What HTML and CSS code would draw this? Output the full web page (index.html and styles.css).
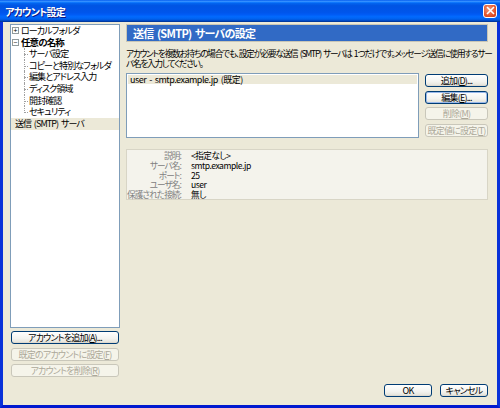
FILE: index.html
```html
<!DOCTYPE html>
<html lang="ja">
<head>
<meta charset="utf-8">
<title>アカウント設定</title>
<link rel="stylesheet" href="styles.css">
</head>
<body>
<div class="window">
  <div class="titlebar">
    <span class="title">アカウント設定</span>
    <span class="close"><svg width="9" height="9" viewBox="0 0 9 9"><path d="M1 1L8 8M8 1L1 8" stroke="#fff" stroke-width="1.6"/></svg></span>
  </div>
  <div class="client">
    <div class="leftcol">
      <div class="tree">
        <div class="node"><span class="pm">+</span><span>ローカルフォルダ</span></div>
        <div class="node bold"><span class="pm">−</span><span>任意の名称</span></div>
        <div class="children">
          <div class="child">サーバ設定</div>
          <div class="child">コピーと特別なフォルダ</div>
          <div class="child">編集とアドレス入力</div>
          <div class="child">ディスク領域</div>
          <div class="child">開封確認</div>
          <div class="child last">セキュリティ</div>
        </div>
        <div class="node selected">送信 (SMTP) サーバ</div>
      </div>
      <div class="leftbtns">
        <button class="btn">アカウントを追加(<u>A</u>)...</button>
        <button class="btn" disabled>既定のアカウントに設定(<u>F</u>)</button>
        <button class="btn" disabled>アカウントを削除(<u>R</u>)</button>
      </div>
    </div>
    <div class="rightcol">
      <div class="header">送信 (SMTP) サーバの設定</div>
      <p class="desc">アカウントを複数お持ちの場合でも、設定が必要な送信 (SMTP) サーバは 1つだけです。メッセージ送信に使用するサー<br>バ名を入力してください。</p>
      <div class="listrow">
        <div class="list">
          <div class="item">user - smtp.example.jp (既定)</div>
        </div>
        <div class="listbtns">
          <button class="btn">追加(<u>D</u>)...</button>
          <button class="btn focus">編集(<u>E</u>)...</button>
          <button class="btn" disabled>削除(<u>M</u>)</button>
          <button class="btn" disabled>既定値に設定(<u>T</u>)</button>
        </div>
      </div>
      <div class="details">
        <span class="lbl">説明:</span><span class="val">&lt;指定なし&gt;</span>
        <span class="lbl">サーバ名:</span><span class="val">smtp.example.jp</span>
        <span class="lbl">ポート:</span><span class="val">25</span>
        <span class="lbl">ユーザ名:</span><span class="val">user</span>
        <span class="lbl">保護された接続:</span><span class="val">無し</span>
      </div>
      <div class="dlgbtns">
        <button class="btn">OK</button>
        <button class="btn">キャンセル</button>
      </div>
    </div>
  </div>
</div>
</body>
</html>
```
FILE: styles.css
```css
* { box-sizing: border-box; }
html, body { margin: 0; padding: 0; }
body {
  width: 500px;
  height: 408px;
  font-family: "Noto Sans CJK JP", "Liberation Sans", sans-serif;
  font-size: 9px;
  font-feature-settings: "palt";
  letter-spacing: -0.9px;
  word-spacing: 1.5px;
  color: #000;
  overflow: hidden;
}
.window {
  width: 500px;
  height: 408px;
  display: flex;
  flex-direction: column;
  background: #0842d6;
  border-left: 3px solid #0831d9;
  border-right: 3px solid #0831d9;
  border-bottom: 3px solid #0019cf;
}
.titlebar {
  height: 22px;
  margin: 0 -3px;
  padding: 0 3px 0 5px;
  display: flex;
  align-items: center;
  justify-content: space-between;
  background: linear-gradient(#0058ee 0%, #3a93ff 6%, #127dff 10%, #0262ee 16%, #0054e3 26%, #0055eb 56%, #005bf5 66%, #026afe 76%, #0062ef 86%, #0052d6 92%, #0040ab 96%, #003092 100%);
  color: #fff;
}
.title {
  font-weight: bold;
  font-size: 10px;
  letter-spacing: -0.8px;
  text-shadow: 1px 1px 0 #0a1883;
}
.close {
  width: 14px;
  height: 14px;
  margin-top: -1px;
  border: 1px solid #fff;
  border-radius: 3px;
  background: radial-gradient(circle at 40% 35%, #f29a7b, #e3552c 60%, #c33b14);
  display: flex;
  align-items: center;
  justify-content: center;
}
.close svg { display: block; }
.client {
  flex: 1;
  min-height: 0;
  background: #ece9d8;
  display: flex;
  gap: 6px;
  padding: 2px 9px 8px 7px;
}
.leftcol {
  width: 110px;
  flex: none;
  display: flex;
  flex-direction: column;
}
.tree {
  height: 304px;
  background: #fff;
  border: 1px solid #7f9db9;
  padding: 0;
}
.node {
  display: flex;
  align-items: center;
  height: 11.6px;
  line-height: 11.6px;
  white-space: nowrap;
}
.node.bold { font-weight: bold; font-size: 9.5px; }
.pm {
  width: 7px;
  height: 7px;
  border: 1px solid #919b9c;
  font-size: 7px;
  line-height: 5px;
  letter-spacing: 0;
  text-align: center;
  font-weight: normal;
  color: #000;
  margin: 0 2px 0 1px;
  background: #fff;
  flex: none;
}
.children {
  margin-left: 13px;
}
.child {
  height: 11.6px;
  line-height: 11.6px;
  padding-left: 5px;
  position: relative;
  white-space: nowrap;
}
.child::before {
  content: "";
  position: absolute;
  left: 0;
  top: 0;
  bottom: 0;
  border-left: 1px dotted #a0a0a0;
}
.child.last::before { bottom: 5px; }
.child::after {
  content: "";
  position: absolute;
  left: 0;
  top: 6px;
  width: 4px;
  border-top: 1px dotted #a0a0a0;
}
.node.selected {
  margin-top: 0.5px;
  background: #ece9d8;
  height: 12px;
  padding-left: 4px;
}
.leftbtns {
  margin-top: 3px;
  display: flex;
  flex-direction: column;
  gap: 3.7px;
  padding: 0 1px;
}
.btn {
  font-family: inherit;
  font-size: 9px;
  letter-spacing: -0.8px;
  word-spacing: 1px;
  font-feature-settings: "palt";
  height: 13px;
  padding: 0;
  border: 1px solid #003c74;
  border-radius: 3px;
  background: linear-gradient(#ffffff, #f3f3ef 60%, #e6e5dd 90%, #d6d0c5);
  color: #000;
  line-height: 11px;
  white-space: nowrap;
}
.btn:disabled {
  border-color: #c9c7ba;
  background: #f5f4ea;
  color: #aca899;
}
.btn.focus {
  box-shadow: inset 0 0 0 1px #98b8ea;
}
.rightcol {
  width: 362px;
  flex: none;
  min-width: 0;
  display: flex;
  flex-direction: column;
}
.header {
  height: 18px;
  background: #316ac5;
  border: 1px solid #c9c6b6;
  color: #fff;
  font-weight: bold;
  font-size: 11px;
  letter-spacing: -0.7px;
  padding-left: 6px;
  line-height: 16px;
}
.desc {
  margin: 6px 0 0 0;
  font-size: 8.6px;
  letter-spacing: -1.2px;
  line-height: 10px;
  white-space: nowrap;
}
.listrow {
  display: flex;
  gap: 6px;
  margin-top: 5px;
}
.list {
  width: 293px;
  height: 65px;
  background: #fff;
  border: 1px solid #7f9db9;
  padding: 1px;
}
.item {
  background: #ece9d8;
  height: 9px;
  line-height: 9px;
  padding-left: 2px;
  letter-spacing: -0.5px;
}
.listbtns {
  width: 63px;
  display: flex;
  flex-direction: column;
  gap: 3.7px;
  padding-top: 1px;
}
.details {
  margin-top: 11px;
  height: 51px;
  border: 1px solid #d8d5c6;
  background: #f4f3ec;
  display: grid;
  grid-template-columns: 54px 1fr;
  column-gap: 10px;
  align-content: start;
  padding-top: 1px;
  font-size: 8.6px;
  line-height: 9.8px;
}
.lbl { color: #808080; text-align: right; white-space: nowrap; }
.val { color: #000; letter-spacing: -0.5px; }
.dlgbtns {
  margin-top: auto;
  display: flex;
  justify-content: flex-end;
  gap: 8px;
}
.dlgbtns .btn { width: 48px; }
```
